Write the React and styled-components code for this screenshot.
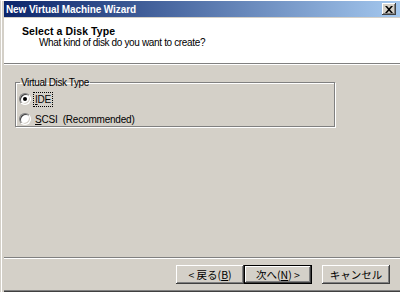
import styled, { createGlobalStyle } from "styled-components";

const GlobalStyle = createGlobalStyle`
  html, body {
    margin: 0;
    padding: 0;
    background: #d4d0c8;
  }
  body {
    font-family: "Liberation Sans", Arial, sans-serif;
    font-size: 10px;
    color: #000;
  }
`;

const UI_FONT = `"Liberation Sans", "Noto Sans CJK JP", sans-serif`;
const JP_FONT = `"Noto Sans CJK JP", "Liberation Sans", sans-serif`;

export default function App() {
  return (
    <>
      <GlobalStyle />
      <Window>
        <TitleBar>
          <Title>New Virtual Machine Wizard</Title>
          <CloseButton aria-label="close">
            <svg width="8" height="7" viewBox="0 0 8 7">
              <path d="M0 0h2l2 2.2L6 0h2L5 3.5 8 7H6L4 4.8 2 7H0l3-3.5z" fill="#000" />
            </svg>
          </CloseButton>
        </TitleBar>
        <Header>
          <HeaderTitle>Select a Disk Type</HeaderTitle>
          <HeaderSub>What kind of disk do you want to create?</HeaderSub>
        </Header>
        <Divider />
        <Body>
          <GroupBox>
            <Legend>Virtual Disk Type</Legend>
            <RadioRow>
              <Radio $checked />
              <RadioLabel $focused>
                <u>I</u>DE
              </RadioLabel>
            </RadioRow>
            <RadioRow>
              <Radio />
              <RadioLabel>
                <u>S</u>CSI&nbsp;&nbsp;(Recommended)
              </RadioLabel>
            </RadioRow>
          </GroupBox>
        </Body>
        <Divider />
        <Footer>
          <Button>
            &lt; 戻る(<u>B</u>)
          </Button>
          <Button $default>
            次へ(<u>N</u>) &gt;
          </Button>
          <Button $gap>キャンセル</Button>
        </Footer>
      </Window>
    </>
  );
}

const Window = styled.div`
  width: 404px;
  height: 292px;
  box-sizing: border-box;
  display: flex;
  flex-direction: column;
  background: #d4d0c8;
  border-top: 1px solid #fff;
  border-left: 1px solid #d4d0c8;
  padding: 0 0 2px 3px;
  box-shadow: inset 1px 0 0 #fff, inset 3px 0 0 #d4d0c8, inset 0 -1px 0 #404040,
    inset 0 -2px 0 #808080;
  overflow: hidden;
`;

const TitleBar = styled.div`
  height: 16px;
  margin: 0 0 1px 0;
  display: flex;
  align-items: center;
  justify-content: space-between;
  padding: 0 8px 0 2px;
  background: linear-gradient(to right, #0a246a, #a6caf0);
`;

const Title = styled.span`
  color: #fff;
  font-family: ${UI_FONT};
  font-weight: bold;
  font-size: 10px;
  letter-spacing: -0.1px;
`;

const CloseButton = styled.div`
  width: 14px;
  height: 12px;
  box-sizing: border-box;
  display: flex;
  align-items: center;
  justify-content: center;
  background: #d4d0c8;
  box-shadow: inset -1px -1px 0 #404040, inset 1px 1px 0 #fff,
    inset -2px -2px 0 #808080;
`;

const Header = styled.div`
  height: 45px;
  box-sizing: border-box;
  background: #fff;
  padding: 7px 0 0 18px;
  display: flex;
  flex-direction: column;
`;

const HeaderTitle = styled.div`
  font-family: ${UI_FONT};
  font-weight: bold;
  font-size: 10.5px;
  letter-spacing: 0.1px;
  line-height: 12px;
`;

const HeaderSub = styled.div`
  font-family: ${UI_FONT};
  font-size: 10px;
  letter-spacing: -0.35px;
  line-height: 12px;
  padding-left: 17px;
`;

const Divider = styled.div`
  height: 1px;
  background: #808080;
  border-bottom: 1px solid #fff;
`;

const Body = styled.div`
  flex: 1;
  padding: 12px 0 0 11px;
`;

const GroupBox = styled.fieldset`
  width: 320px;
  height: 50px;
  box-sizing: border-box;
  margin: 0;
  padding: 1px 0 0 3px;
  border: 1px solid #808080;
  box-shadow: 1px 1px 0 #fff, inset 1px 1px 0 #fff;
`;

const Legend = styled.legend`
  font-family: ${UI_FONT};
  font-size: 10px;
  letter-spacing: -0.4px;
  padding: 0 1px;
  margin-left: 1px;
`;

const RadioRow = styled.div`
  display: flex;
  align-items: center;
  height: 20px;
  gap: 3px;
`;

const Radio = styled.span`
  width: 12px;
  height: 12px;
  box-sizing: border-box;
  border-radius: 50%;
  background: #fff;
  border-top: 1px solid #808080;
  border-left: 1px solid #808080;
  border-right: 1px solid #fff;
  border-bottom: 1px solid #fff;
  box-shadow: inset 1px 1px 0 #404040, inset -1px -1px 0 #d4d0c8;
  display: flex;
  align-items: center;
  justify-content: center;
  &::after {
    content: "";
    width: 4px;
    height: 4px;
    border-radius: 50%;
    background: ${(p) => (p.$checked ? "#000" : "transparent")};
  }
`;

const RadioLabel = styled.span`
  font-family: ${UI_FONT};
  font-size: 10px;
  letter-spacing: -0.2px;
  padding: 0 1px;
  line-height: 13px;
  outline: ${(p) => (p.$focused ? "1px dotted #000" : "none")};
`;

const Footer = styled.div`
  flex: 0 0 31px;
  display: flex;
  align-items: center;
  padding-left: 172px;
`;

const Button = styled.div`
  width: 68px;
  height: 19px;
  box-sizing: border-box;
  margin-left: ${(p) => (p.$gap ? "10px" : "0")};
  display: flex;
  align-items: center;
  justify-content: center;
  font-family: ${JP_FONT};
  font-size: 10.5px;
  background: #d4d0c8;
  border: ${(p) => (p.$default ? "1px solid #000" : "none")};
  box-shadow: inset -1px -1px 0 #404040, inset 1px 1px 0 #fff,
    inset -2px -2px 0 #808080;
`;
